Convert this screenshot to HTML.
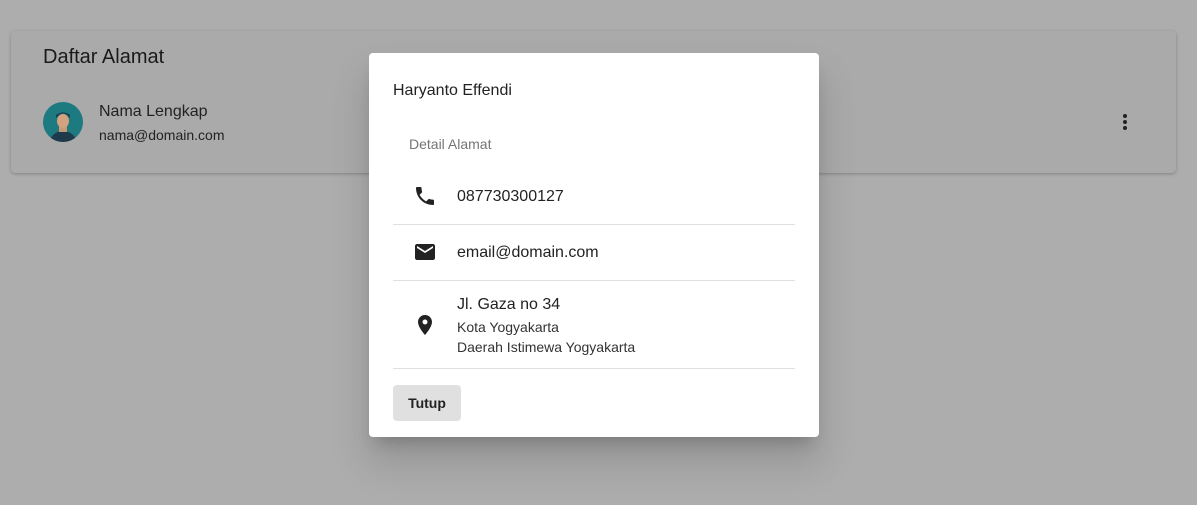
<!DOCTYPE html>
<html><head><style>
body{margin:0;width:1197px;height:505px;background:#adadad;font-family:"Liberation Sans",Roboto,sans-serif;position:relative;overflow:hidden;color:#1e1e1e}
.card{position:absolute;left:11px;top:31px;width:1165px;height:142px;background:#aaaaaa;border-radius:4px;box-shadow:0 1px 3px rgba(0,0,0,.25)}
.t{position:absolute;left:32px;top:15px;font-size:20px;font-weight:500;color:#1a1a1a}
.av{position:absolute;left:32px;top:71px;width:40px;height:40px;border-radius:50%;background:#1c7a80;overflow:hidden}
.n1{position:absolute;left:88px;top:72px;font-size:16px;color:#222}
.n2{position:absolute;left:88px;top:96px;font-size:14px;color:#222}
.dots{position:absolute;left:1110px;top:82px}
.dlg{position:absolute;left:369px;top:53px;width:450px;height:384px;background:#fff;border-radius:4px;box-shadow:0 11px 15px -7px rgba(0,0,0,.2),0 24px 38px 3px rgba(0,0,0,.14)}
.h{position:absolute;left:24px;top:29px;font-size:16px;color:#222}
.sub{position:absolute;left:40px;top:83px;font-size:14px;color:#757575}
.row{position:absolute;left:24px;width:402px;border-bottom:1px solid #e0e0e0}
.ic{position:absolute;left:20px}
.tx{position:absolute;left:64px;font-size:16px;color:#222}
.sm{font-size:14px;color:#333;line-height:20px}
.btn{position:absolute;left:24px;top:332px;width:68px;height:36px;background:#e0e0e0;border-radius:4px;font-size:14px;font-weight:bold;text-align:center;line-height:36px;color:#222}
</style></head><body>
<div class="card">
<div class="t">Daftar Alamat</div>
<div class="av"><svg width="40" height="40"><ellipse cx="20" cy="40" rx="13" ry="11" fill="#1f3a4a"/><rect x="16" y="22" width="8" height="8" fill="#c79a76"/><ellipse cx="20" cy="19" rx="6" ry="7" fill="#d4a27e"/><path d="M13 16 Q20 7 27 16 L27 13 Q20 8 13 13Z" fill="#1f3a4a"/></svg></div>
<div class="n1">Nama Lengkap</div>
<div class="n2">nama@domain.com</div>
<svg class="dots" width="8" height="20"><circle cx="4" cy="3" r="2" fill="#222"/><circle cx="4" cy="9" r="2" fill="#222"/><circle cx="4" cy="15" r="2" fill="#222"/></svg>
</div>
<div class="dlg">
<div class="h">Haryanto Effendi</div>
<div class="sub">Detail Alamat</div>
<div class="row" style="top:116px;height:55px">
<svg class="ic" style="top:15px" width="24" height="24" viewBox="0 0 24 24"><path fill="#222" d="M6.6 10.8c1.4 2.8 3.8 5.1 6.6 6.6l2.2-2.2c.3-.3.7-.4 1-.2 1.1.4 2.3.6 3.6.6.6 0 1 .4 1 1V20c0 .6-.4 1-1 1C10.6 21 3 13.4 3 4c0-.6.5-1 1-1h3.5c.6 0 1 .4 1 1 0 1.3.2 2.5.6 3.6.1.3 0 .7-.2 1z"/></svg>
<div class="tx" style="top:19px">087730300127</div></div>
<div class="row" style="top:172px;height:55px">
<svg class="ic" style="top:15px" width="24" height="24" viewBox="0 0 24 24"><path fill="#222" d="M20 4H4c-1.1 0-2 .9-2 2v12c0 1.1.9 2 2 2h16c1.1 0 2-.9 2-2V6c0-1.1-.9-2-2-2zm0 4l-8 5-8-5V6l8 5 8-5v2z"/></svg>
<div class="tx" style="top:19px">email@domain.com</div></div>
<div class="row" style="top:228px;height:87px">
<svg class="ic" style="top:32px" width="24" height="24" viewBox="0 0 24 24"><path fill="#222" d="M12 2C8.1 2 5 5.1 5 9c0 5.2 7 13 7 13s7-7.8 7-13c0-3.9-3.1-7-7-7zm0 9.5a2.5 2.5 0 110-5 2.5 2.5 0 010 5z"/></svg>
<div class="tx" style="top:15px">Jl. Gaza no 34<div class="sm" style="margin-top:3px">Kota Yogyakarta<br>Daerah Istimewa Yogyakarta</div></div></div>
<div class="btn">Tutup</div>
</div>
</body></html>
